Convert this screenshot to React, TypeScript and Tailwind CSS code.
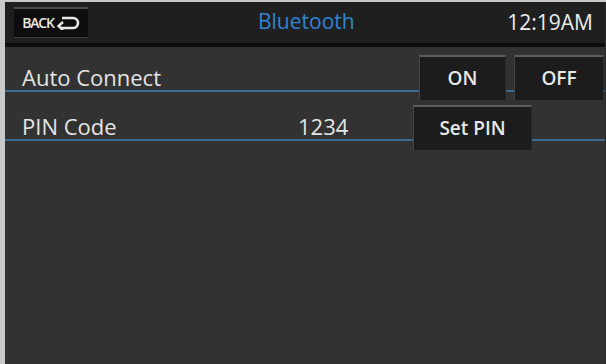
import React from 'react';

const font = { fontFamily: '"Open Sans", "DejaVu Sans", sans-serif' };

const ReturnArrow = () => (
  <svg width="24" height="14" viewBox="0 0 24 14" fill="none" className="ml-[2px]">
    <path d="M6 2 H17 A5 5 0 0 1 17 12 H4" stroke="#e6e6e6" strokeWidth="2.6" />
    <path d="M7 6 L2.5 10 L7 14" stroke="#e6e6e6" strokeWidth="2.4" />
  </svg>
);

const PanelButton = ({ label, className }: { label: string; className: string }) => (
  <div
    className={`flex items-center justify-center bg-[#1c1c1c] border-t-2 border-l border-r border-t-[#5c5c5c] border-l-[#444444] border-r-[#2a2a2a] text-[19px] font-semibold text-[#e8e8e8] ${className}`}
  >
    {label}
  </div>
);

export default function App() {
  return (
    <div className="w-[606px] h-[364px] bg-[#c9c9c9] pt-[2px] pl-[5px] flex" style={font}>
      <div className="flex-1 flex flex-col bg-[#323232] border-r border-[#2a2a2a] overflow-hidden">
        {/* Header bar */}
        <div className="h-[45px] shrink-0 bg-[#1f1f1f] border-b-4 border-[#0e0e0e] flex items-center relative">
          <div className="ml-[9px] w-[74px] h-[31px] bg-[#0d0d0d] border-t-2 border-b border-t-[#4a4a4a] border-b-[#3a3a3a] flex items-center justify-center">
            <span className="text-[14px] font-semibold tracking-[-1.2px] text-[#e6e6e6] leading-none">BACK</span>
            <ReturnArrow />
          </div>
          <div className="absolute left-[253px] top-[4px] text-[21px] text-[#2f84d4]">Bluetooth</div>
          <div className="ml-auto mr-[12px] text-[21px] text-[#ececec]">12:19AM</div>
        </div>

        {/* Auto Connect row */}
        <div className="h-[45px] shrink-0 border-b-2 border-[#3b6b92] flex">
          <span className="self-end pl-[17px] text-[22px] leading-[26px] text-[#e4e4e4]">Auto Connect</span>
          <div className="ml-auto flex gap-[8px] mt-[8px] mr-[1px]">
            <PanelButton label="ON" className="w-[87px] h-[45px]" />
            <PanelButton label="OFF" className="w-[90px] h-[45px]" />
          </div>
        </div>

        {/* PIN Code row */}
        <div className="h-[49px] shrink-0 border-b-2 border-[#3b6b92] flex">
          <span className="self-end pl-[17px] w-[293px] text-[22px] leading-[26px] text-[#e4e4e4]">PIN Code</span>
          <span className="self-end w-[115px] text-[22px] leading-[26px] text-[#e4e4e4]">1234</span>
          <div className="mt-[13px]">
            <PanelButton label="Set PIN" className="w-[119px] h-[45px]" />
          </div>
        </div>

        <div className="flex-1" />
      </div>
    </div>
  );
}
